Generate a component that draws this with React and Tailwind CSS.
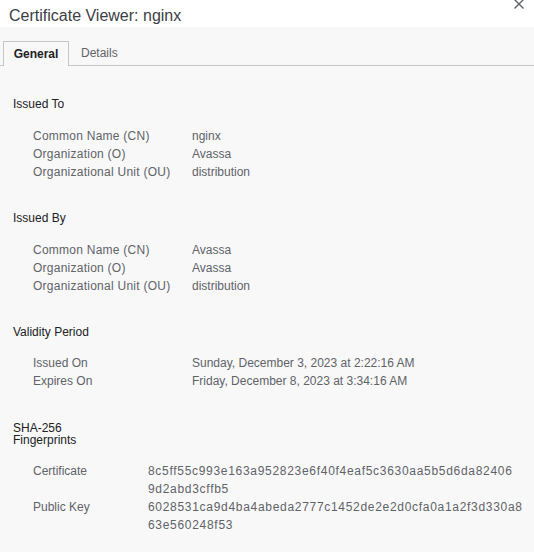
const issuedTo = [
  ['Common Name (CN)', 'nginx'],
  ['Organization (O)', 'Avassa'],
  ['Organizational Unit (OU)', 'distribution'],
];

const issuedBy = [
  ['Common Name (CN)', 'Avassa'],
  ['Organization (O)', 'Avassa'],
  ['Organizational Unit (OU)', 'distribution'],
];

const validity = [
  ['Issued On', 'Sunday, December 3, 2023 at 2:22:16 AM'],
  ['Expires On', 'Friday, December 8, 2023 at 3:34:16 AM'],
];

const fingerprints = [
  ['Certificate', ['8c5ff55c993e163a952823e6f40f4eaf5c3630aa5b5d6da82406', '9d2abd3cffb5']],
  ['Public Key', ['6028531ca9d4ba4abeda2777c1452de2e2d0cfa0a1a2f3d330a8', '63e560248f53']],
];

const Section = ({ title, rows }) => (
  <div className="mb-[28px]">
    <div className="h-[18px] leading-[18px] text-[#202124]">{title}</div>
    <div className="mt-[14px] pl-[20px]">
      {rows.map(([label, value]) => (
        <div key={label} className="flex h-[18px] leading-[18px] text-[#5f6368]">
          <div className="w-[159px] shrink-0 tracking-[0.25px]">{label}</div>
          <div>{value}</div>
        </div>
      ))}
    </div>
  </div>
);

export default function App() {
  return (
    <div
      className="w-[534px] h-[552px] overflow-hidden bg-[#f8f8f8] text-[12px]"
      style={{ fontFamily: '"Liberation Sans", Arial, sans-serif' }}
    >
      <div className="relative h-[27px] bg-white">
        <div className="pl-[9px] pt-[6px] text-[16px] leading-[20px] text-[#3c4043]">
          Certificate Viewer: nginx
        </div>
        <svg
          className="absolute right-[9px] top-[-2px]"
          width="12"
          height="12"
          viewBox="0 0 12 12"
        >
          <path d="M1.5 1.5 L10.5 10.5 M10.5 1.5 L1.5 10.5" stroke="#5f6368" strokeWidth="1.4" />
        </svg>
      </div>

      <div className="mt-[14px] flex h-[25px] border-b border-[#c6c6c6]">
        <div className="-mb-px ml-[3px] h-[25px] w-[66px] border border-b-0 border-[#c6c6c6] bg-[#f8f8f8] flex items-center justify-center font-bold text-[#202124]">
          General
        </div>
        <div className="flex h-[24px] items-center pl-[12px] text-[#5f6368]">Details</div>
      </div>

      <div className="px-[13px] pt-[29px]">
        <Section title="Issued To" rows={issuedTo} />
        <Section title="Issued By" rows={issuedBy} />
        <div className="mb-[32px]">
          <div className="h-[18px] leading-[18px] text-[#202124]">Validity Period</div>
          <div className="mt-[13px] pl-[20px]">
            {validity.map(([label, value]) => (
              <div key={label} className="flex h-[18px] leading-[18px] text-[#5f6368]">
                <div className="w-[159px] shrink-0">{label}</div>
                <div>{value}</div>
              </div>
            ))}
          </div>
        </div>

        <div className="w-[80px] leading-[12px] text-[#202124]">
          SHA-256
          <br />
          Fingerprints
        </div>
        <div className="mt-[16px] pl-[20px]">
          {fingerprints.map(([label, lines]) => (
            <div key={label} className="flex leading-[18px] text-[#5f6368]">
              <div className="w-[115px] shrink-0">{label}</div>
              <div className="tracking-[0.7px]">
                {lines.map((l) => (
                  <div key={l}>{l}</div>
                ))}
              </div>
            </div>
          ))}
        </div>
      </div>
    </div>
  );
}
